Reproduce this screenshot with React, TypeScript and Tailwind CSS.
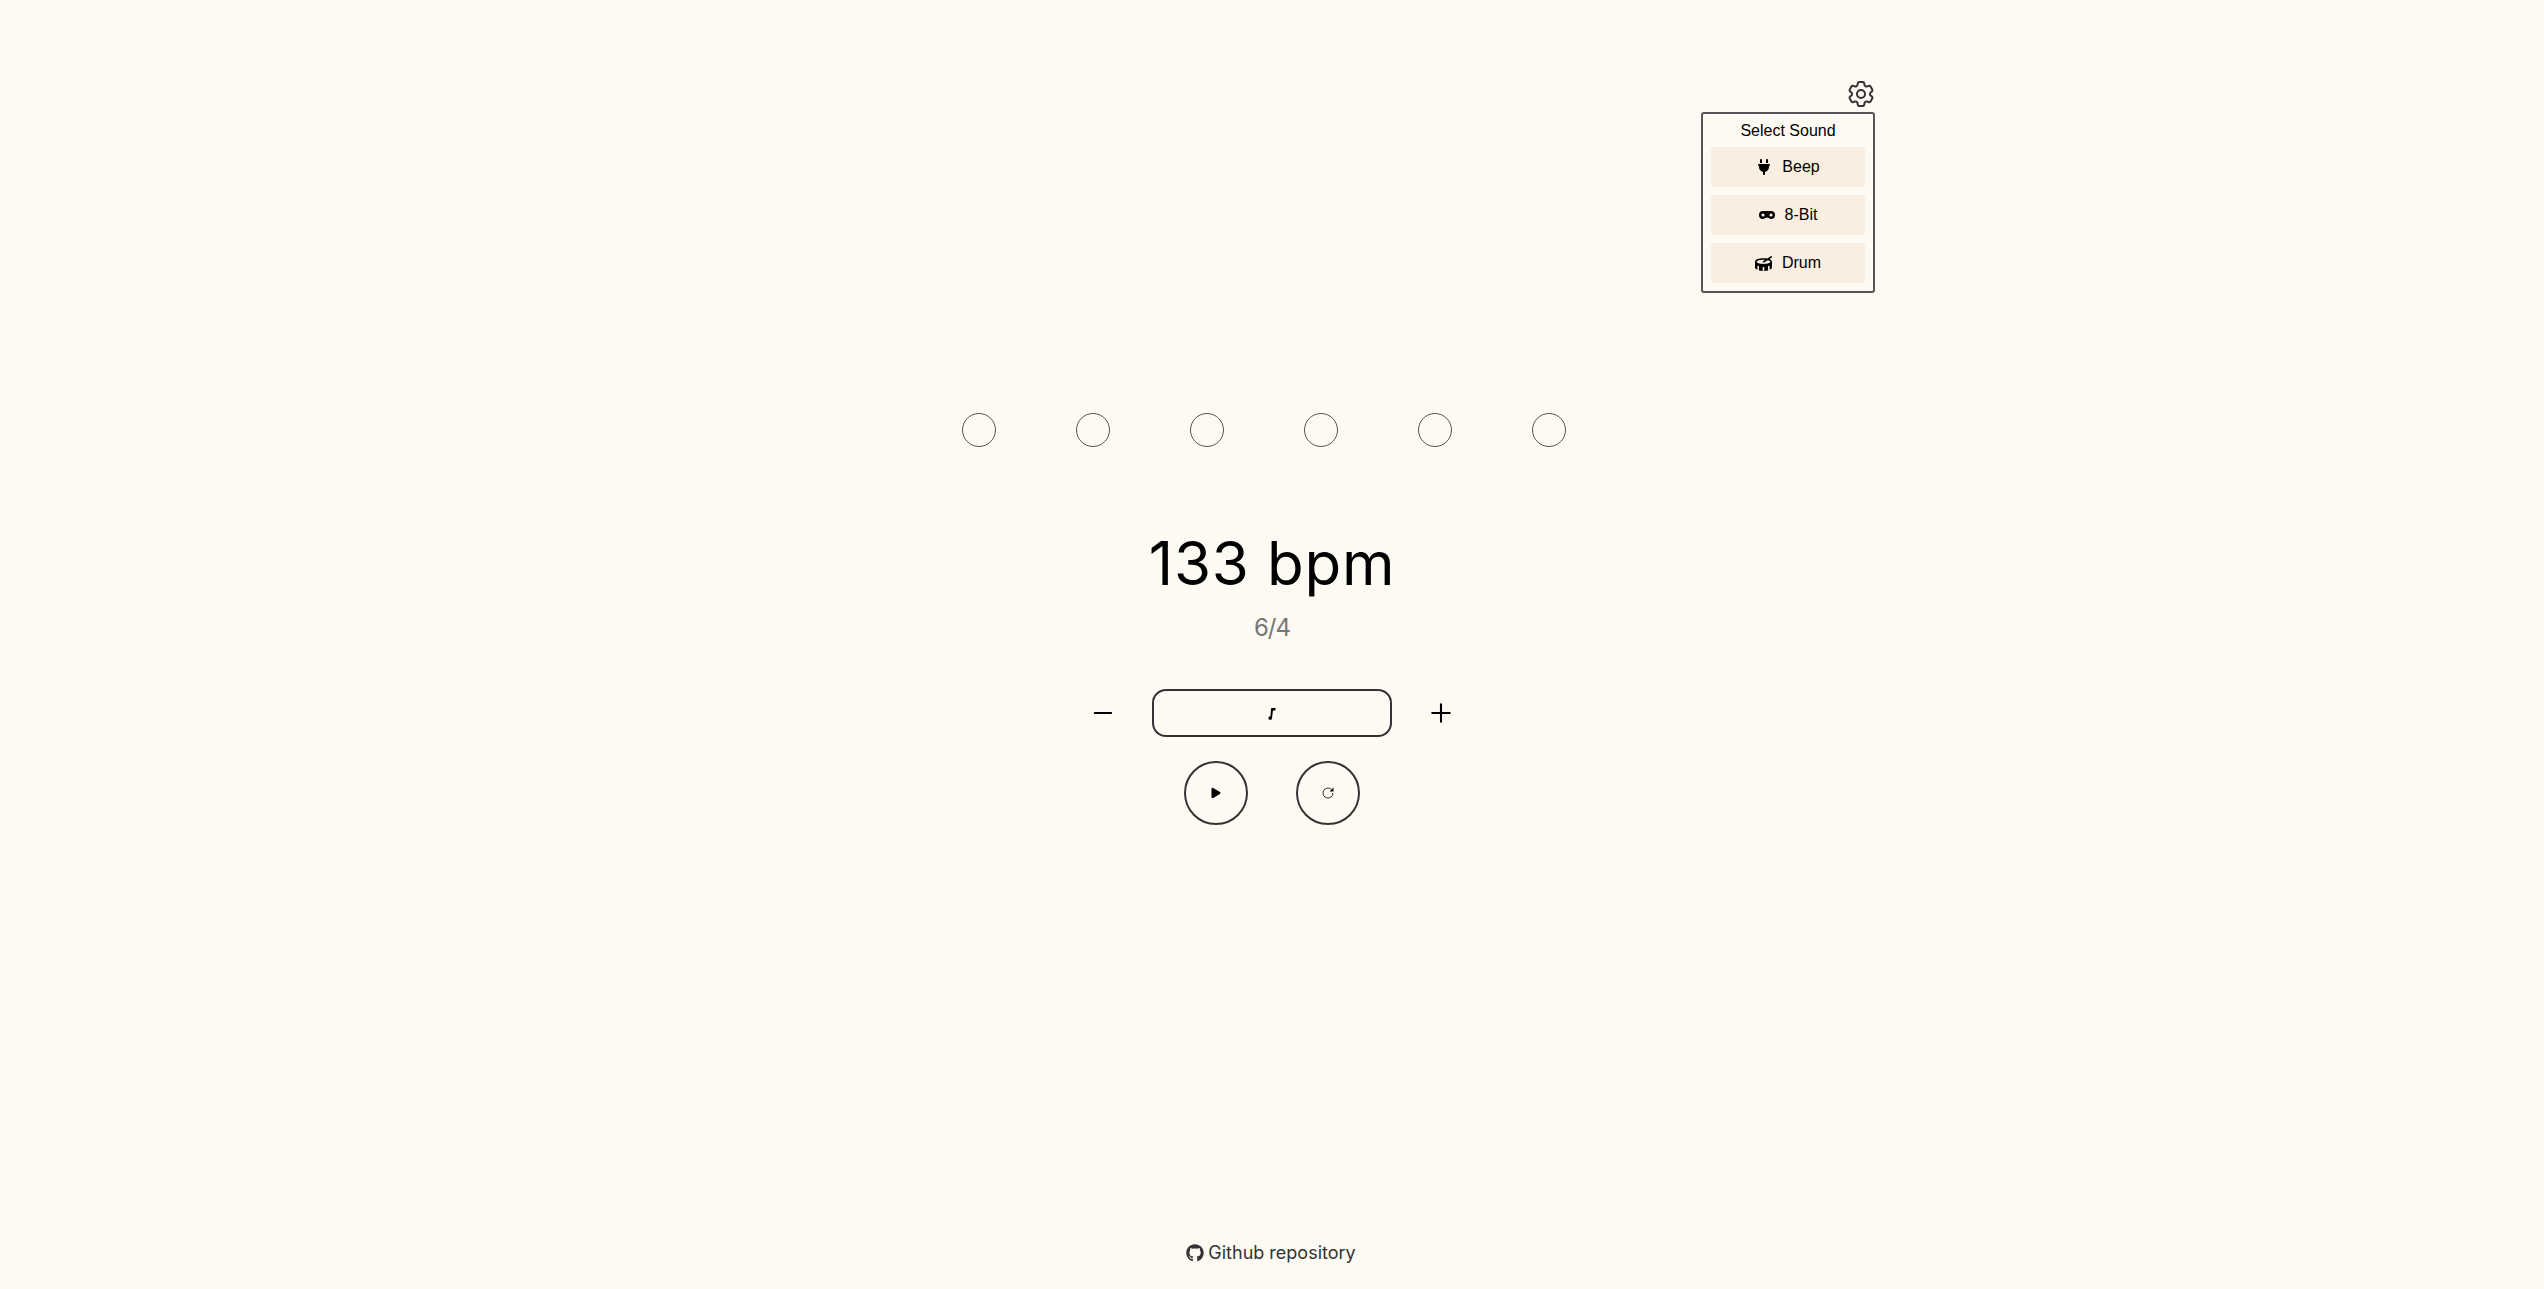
import { HiOutlineCog6Tooth, HiOutlineMinus, HiOutlinePlus } from "react-icons/hi2";
import { FaDrum, FaGithub, FaPlay, FaPlug } from "react-icons/fa6";

const sounds = [
  { name: "Beep", icon: <FaPlug className="w-4 h-4" /> },
  {
    name: "8-Bit",
    icon: (
      <svg viewBox="0 0 16 8" className="w-4 h-2" fill="currentColor">
        <path fillRule="evenodd" d="M4 0h8a4 4 0 0 1 0 8c-1.6 0-2.2-1.6-4-1.600S5.600 8 4 8a4 4 0 0 1 0-8Zm0 2.400a1.600 1.600 0 1 0 0 3.200 1.600 1.600 0 0 0 0-3.200Zm8 0a1.600 1.600 0 1 0 0 3.200 1.600 1.600 0 0 0 0-3.200Z" />
      </svg>
    ),
  },
  { name: "Drum", icon: <FaDrum className="w-[17px] h-[17px]" /> },
];

export default function App() {
  return (
    <div className="h-[1289px] overflow-hidden bg-[#fdfaf3] flex flex-col items-center text-black font-['Inter',sans-serif]">
      <div className="relative w-[1206px] h-[413px] pt-[78px] flex-none">
        <div className="flex justify-end -mr-[2px]">
          <HiOutlineCog6Tooth className="w-8 h-8 text-[#333]" />
        </div>
        <div className="absolute right-0 top-[112px] w-[174px] h-[181px] border-2 border-[#555] rounded-[3px] px-2 font-['Liberation_Sans',sans-serif] flex flex-col">
          <div className="text-[16px] leading-[24px] text-center mt-[5px] mb-[4px]">Select Sound</div>
          <div className="flex flex-col gap-2">
            {sounds.map((s) => (
              <div key={s.name} className="h-10 bg-[#f9eedf] rounded-[3px] flex items-center justify-center gap-[10px] text-[16px]">
                {s.icon}
                <span>{s.name}</span>
              </div>
            ))}
          </div>
        </div>
      </div>

      <div className="flex gap-20 flex-none w-[604px] -translate-x-[8px]">
        {[0, 1, 2, 3, 4, 5].map((i) => (
          <div key={i} className="w-[34px] h-[34px] rounded-full border-[1.5px] border-[#555] flex-none" />
        ))}
      </div>

      <div className="mt-[71px] text-[60px] leading-[90px] tracking-[0.7px] font-normal">133 bpm</div>
      <div className="mt-[4px] text-[24px] leading-[32px] text-[#777] tracking-[-1px]">6/4</div>

      <div className="mt-[45px] flex items-center gap-[35px]">
        <HiOutlineMinus className="w-7 h-7" strokeWidth={1.8} />
        <div className="w-[240px] h-[48px] border-2 border-[#333] rounded-[14px] flex items-center justify-center">
          <svg viewBox="0 0 8 13" className="w-2 h-[13px]" fill="currentColor">
            <path d="M3 1.500 4 1h3.500v2.400H5L4 11a1.800 1.800 0 1 1-1.500-1.700Z" />
          </svg>
        </div>
        <HiOutlinePlus className="w-7 h-7" strokeWidth={1.8} />
      </div>

      <div className="mt-[24px] flex gap-12">
        <div className="w-16 h-16 rounded-full border-2 border-[#333] flex items-center justify-center">
          <FaPlay className="w-3 h-3" />
        </div>
        <div className="w-16 h-16 rounded-full border-2 border-[#333] flex items-center justify-center">
          <svg viewBox="0 0 14 14" className="w-[14px] h-[14px]" fill="none" stroke="#333" strokeWidth="1">
            <path d="M12 7A5 5 0 1 1 10.200 3.200" />
            <path d="M12.500 1.500v4H8.500Z" fill="#000" stroke="none" />
          </svg>
        </div>
      </div>

      <div className="mt-auto mb-[24px] flex items-center gap-[4px] text-[18px] leading-[24px] text-[#333] -translate-x-[1px]">
        <FaGithub className="w-[18px] h-[18px]" />
        <span>Github repository</span>
      </div>
    </div>
  );
}
